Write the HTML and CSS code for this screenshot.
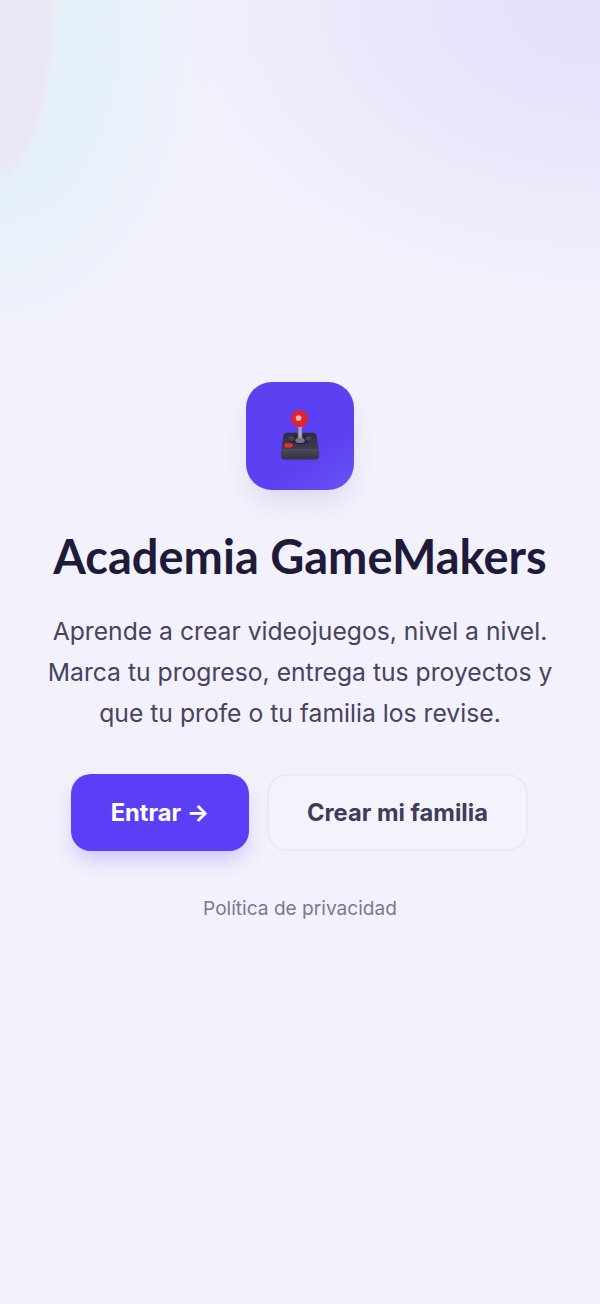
FILE: index.html
```html
<!DOCTYPE html>
<html lang="es">
<head>
<meta charset="utf-8">
<title>Academia GameMakers</title>
<link rel="stylesheet" href="styles.css">
</head>
<body>
<main class="hero">
  <div class="logo">
    <svg class="joystick" viewBox="0 0 42 54" aria-hidden="true">
      <defs>
        <linearGradient id="base" x1="0" y1="0" x2="0" y2="1"><stop offset="0" stop-color="#2f2e3e"/><stop offset="1" stop-color="#3f3e52"/></linearGradient>
        <linearGradient id="front" x1="0" y1="0" x2="0" y2="1"><stop offset="0" stop-color="#4c4b60"/><stop offset="1" stop-color="#33323f"/></linearGradient>
        <linearGradient id="stick" x1="0" y1="0" x2="1" y2="0"><stop offset="0" stop-color="#6f6f80"/><stop offset=".5" stop-color="#b9b9c6"/><stop offset="1" stop-color="#7f7f90"/></linearGradient>
      </defs>
      <path d="M7 25h28q3 0 3.500 3l2.500 17H1l2.500-17Q4 25 7 25z" fill="url(#base)"/>
      <path d="M1 42h40v7q0 4-4 4H5q-4 0-4-4z" fill="url(#front)"/>
      <ellipse cx="21" cy="32" rx="12" ry="5" fill="#262531"/>
      <ellipse cx="12" cy="31" rx="3" ry="2.500" fill="#45445a"/>
      <ellipse cx="30" cy="31" rx="3" ry="2.500" fill="#45445a"/>
      <path d="M19 14h4l.500 19h-5z" fill="url(#stick)"/>
      <ellipse cx="21" cy="33" rx="5" ry="2.800" fill="#767685"/>
      <rect x="4.500" y="36" width="9" height="4.500" rx="2.200" fill="#ea2f2c"/>
      <circle cx="20.500" cy="10" r="9" fill="#e3242f"/>
      <circle cx="19.500" cy="9.500" r="3" fill="#f2b5b8"/>
    </svg>
  </div>
  <h1 class="title">Academia GameMakers</h1>
  <p class="lead">Aprende a crear videojuegos, nivel a nivel.<br>Marca tu progreso, entrega tus proyectos y<br>que tu profe o tu familia los revise.</p>
  <div class="actions">
    <a class="btn btn-primary" href="#">Entrar →</a>
    <a class="btn btn-secondary" href="#">Crear mi familia</a>
  </div>
  <a class="privacy" href="#">Política de privacidad</a>
</main>
</body>
</html>
```
FILE: styles.css
```css
* { box-sizing: border-box; }
html, body { height: 100%; }
body {
  margin: 0;
  font-family: Inter, "Noto Sans", sans-serif;
  background-color: #f3f1fc;
  background-image:
    radial-gradient(ellipse 56px 185px at 0 0, #ebe6f5 0, #ebe6f5 88%, rgba(235, 230, 245, 0) 100%),
    radial-gradient(ellipse 430px 300px at 600px 0, #e4dffa 0, rgba(228, 223, 250, .6) 50%, rgba(228, 223, 250, 0) 100%),
    radial-gradient(ellipse 230px 340px at 0 40px, #e4f1f8 0, rgba(228, 241, 248, .75) 50%, rgba(228, 241, 248, 0) 100%);
  background-repeat: no-repeat;
  overflow: hidden;
}
.hero {
  display: flex;
  flex-direction: column;
  align-items: center;
  padding-top: 382px;
  text-align: center;
}
.logo {
  display: flex;
  align-items: center;
  justify-content: center;
  width: 108px;
  height: 108px;
  border-radius: 26px;
  background: linear-gradient(145deg, #5a40ef 0%, #5b41f1 65%, #6953f3 100%);
  box-shadow: 0 16px 28px -6px rgba(70, 60, 160, .14);
}
.joystick { width: 40px; height: 51.400px; margin-top: -2px; }
.title {
  margin: 37px 0 0;
  font-family: "Lato", "Noto Sans", sans-serif;
  font-weight: 700;
  font-size: 47px;
  line-height: 58px;
  color: #1d1a3a;
}
.lead {
  margin: 26px 0 0;
  font-size: 24.700px;
  line-height: 41px;
  color: #47435f;
}
.actions {
  display: flex;
  gap: 18px;
  margin-top: 40px;
  margin-right: 1px;
}
.btn {
  display: flex;
  align-items: center;
  justify-content: center;
  height: 77px;
  border-radius: 20px;
  font-size: 23.700px;
  font-weight: 700;
  text-decoration: none;
}
.btn-primary {
  width: 178px;
  color: #fff;
  background: #5a3ff6;
  box-shadow: 0 12px 20px -4px rgba(90, 63, 246, .26);
}
.btn-secondary {
  width: 261px;
  color: #3f3b58;
  border: 2px solid #ebe9f6;
  background: #f4f3fc;
}
.privacy {
  margin-top: 44px;
  font-size: 19.100px;
  line-height: 26px;
  color: #7b788f;
  text-decoration: none;
}
```
